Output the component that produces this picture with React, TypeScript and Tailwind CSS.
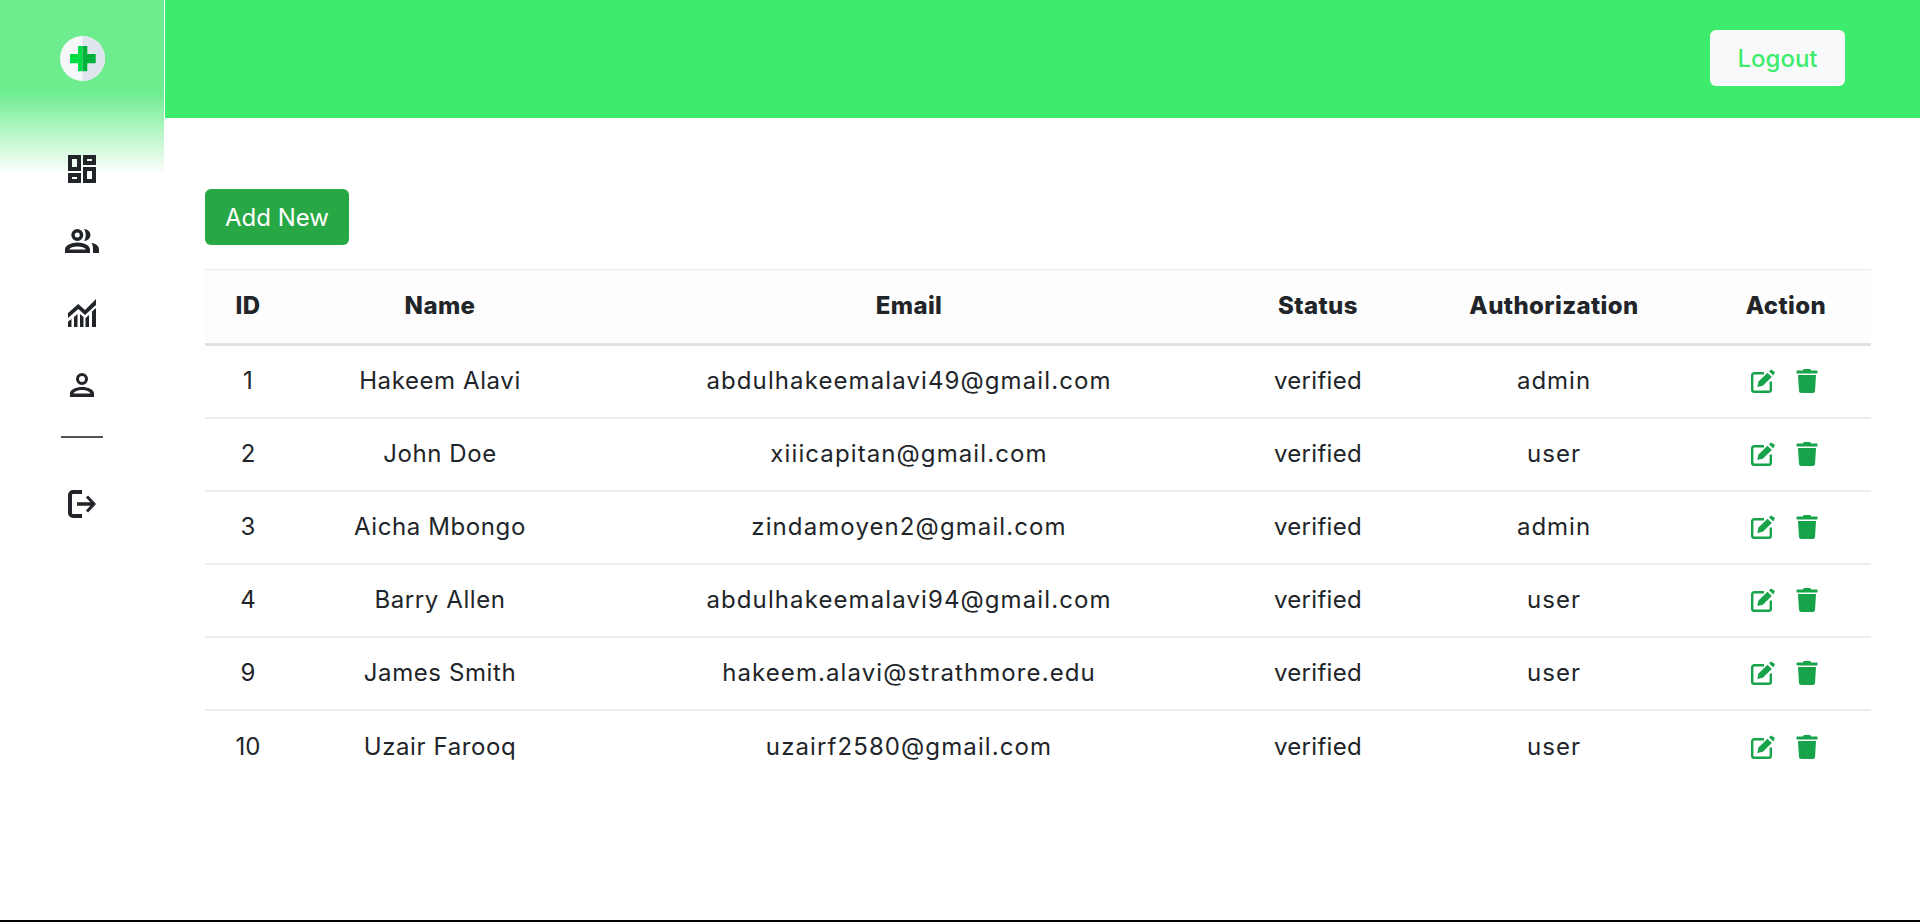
import React from "react";
import { FaTrash } from "react-icons/fa";

const rows = [
  ["1", "Hakeem Alavi", "abdulhakeemalavi49@gmail.com", "verified", "admin"],
  ["2", "John Doe", "xiiicapitan@gmail.com", "verified", "user"],
  ["3", "Aicha Mbongo", "zindamoyen2@gmail.com", "verified", "admin"],
  ["4", "Barry Allen", "abdulhakeemalavi94@gmail.com", "verified", "user"],
  ["9", "James Smith", "hakeem.alavi@strathmore.edu", "verified", "user"],
  ["10", "Uzair Farooq", "uzairf2580@gmail.com", "verified", "user"],
];

const columnTracking = [
  "tracking-[0px]",
  "tracking-[0.6px]",
  "tracking-[1.1px]",
  "tracking-[0.3px]",
  "tracking-[1px]",
];

function Logo() {
  return (
    <svg width="45" height="45" viewBox="0 0 45 45">
      <circle cx="22.500" cy="22.500" r="22.500" fill="#f6f7f9" />
      <path d="M22.500 0a22.500 22.500 0 0 1 0 45z" fill="#dfe5ec" />
      <path d="M18 10H22.500V35.300H18V27.300H10V18H18z" fill="#00dc45" />
      <path d="M22.500 10H27.300V18H35.700V27.300H27.300V35.300H22.500z" fill="#00b23a" />
    </svg>
  );
}

function DashboardIcon() {
  return (
    <svg width="28" height="28" viewBox="0 0 28 28" fill="#212529" fillRule="evenodd">
      <path d="M0 0H13V16H0zM4 4V12H9V4z" />
      <path d="M15 0H28V10H15zM19 4V6H24V4z" />
      <path d="M15 12H28V28H15zM19 16V24H24V16z" />
      <path d="M0 18H13V28H0zM4 22V24H9V22z" />
    </svg>
  );
}

function PeopleIcon() {
  return (
    <svg width="34" height="24" viewBox="0 0 34 24" fill="#212529" fillRule="evenodd">
      <path d="M12.300 0a6 6 0 1 1 0 12 6 6 0 0 1 0-12zM12.300 3.500a2.500 2.500 0 1 0 0 5 2.500 2.500 0 0 0 0-5z" />
      <path d="M19 0a6.500 6 0 0 1 0 12c1.200-1.500 1.700-3.500 1.700-6S20.200 1.500 19 0z" />
      <path d="M0 24v-3.500c0-4 6-7 12.500-7S25 16.500 25 20.500V24zM4 20.500h17c-1-2-4.500-3-8.500-3s-7.500 1-8.500 3z" />
      <path d="M26.500 14c4.500.5 7.500 3 7.500 6.500V24h-6v-3.500c0-2.500-.3-4.800-1.500-6.500z" />
    </svg>
  );
}

function ChartIcon() {
  return (
    <svg width="28" height="28" viewBox="0 0 28 28" fill="#212529">
      <path d="M0 14 10.300 5 17 11 28 0V6L17 16 10.300 10 0 19z" />
      <path d="M0 22.500 3.500 20V28H0zM6 18 9.500 15V28H6zM12 15 15.500 18V28H12zM17.500 19 21 16V28H17.500zM24 12.500 28 9V28H24z" />
    </svg>
  );
}

function PersonIcon() {
  return (
    <svg width="24" height="24" viewBox="0 0 24 24" fill="#212529" fillRule="evenodd">
      <path d="M12 0a6 6 0 1 1 0 12 6 6 0 0 1 0-12zM12 3a3 3 0 1 0 0 6 3 3 0 0 0 0-6z" />
      <path d="M0 24v-3.500c0-4 6-6.500 12-6.500s12 2.500 12 6.500V24zM3.500 20.500h17c-1-2-4.500-3.500-8.500-3.500s-7.500 1.500-8.500 3.500z" />
    </svg>
  );
}

function ExitIcon() {
  return (
    <svg width="28" height="28" viewBox="0 0 28 28" fill="none" stroke="#212529">
      <path d="M14 2H5a3 3 0 0 0-3 3v18a3 3 0 0 0 3 3H14" strokeWidth="4" />
      <path d="M9 14h16" strokeWidth="3.500" />
      <path d="M19 6.500 26 14l-7 7.500" strokeWidth="3" />
    </svg>
  );
}

function EditIcon() {
  return (
    <svg width="24" height="24" viewBox="0 0 24 24" fill="none">
      <path d="M13 4.200H3.200a2 2 0 0 0-2 2v14.600a2 2 0 0 0 2 2h14.600a2 2 0 0 0 2-2V12.500" stroke="currentColor" strokeWidth="2.400" />
      <path d="M6.300 18 7.500 12.500 16.500 3.700 20.800 8 11.800 16.800z" fill="currentColor" />
      <path d="M18 2.300 20 .5 24 3 22.300 6.600z" fill="currentColor" />
    </svg>
  );
}

const font = "font-['Inter','Liberation_Sans',sans-serif]";

export default function App() {
  return (
    <div className={`${font} h-[922px] w-full overflow-hidden border-b-2 border-black bg-white text-[#212529] flex`}>
      <aside className="w-[164px] shrink-0 h-full flex flex-col items-center bg-[linear-gradient(#6cec8d_0,#6eed8e_92px,#ffffff_174px)]">
        <div className="mt-[36px] h-[45px]"><Logo /></div>
        <nav className="mt-[52px] flex flex-col items-center">
          <div className="h-[72px] flex items-center justify-center"><DashboardIcon /></div>
          <div className="h-[72px] flex items-center justify-center"><PeopleIcon /></div>
          <div className="h-[72px] flex items-center justify-center"><ChartIcon /></div>
          <div className="h-[72px] flex items-center justify-center"><PersonIcon /></div>
        </nav>
        <div className="mt-[15px] w-[42px] h-[2px] bg-[#555555]" />
        <div className="mt-[52px]"><ExitIcon /></div>
      </aside>
      <div className="flex-1 ml-px flex flex-col min-w-0">
        <header className="h-[118px] shrink-0 bg-[#3dec6d] flex items-center justify-end pr-[75px]">
          <button className="w-[135px] h-[56px] -mt-[2px] pt-[2px] rounded-[6px] bg-[#f8f9fa] text-[#3dec6d] text-[24px] font-medium">Logout</button>
        </header>
        <main className="pl-[40px] pr-[50px] pt-[71px]">
          <button className="w-[144px] h-[56px] pt-[2px] rounded-[6px] bg-[#28a745] text-white text-[24px]">Add New</button>
          <table className="mt-[24px] w-full table-fixed border-collapse text-center text-[24px] font-normal">
            <colgroup>
              <col className="w-[86px]" />
              <col className="w-[298px]" />
              <col className="w-[640px]" />
              <col className="w-[178px]" />
              <col className="w-[294px]" />
              <col className="w-[170px]" />
            </colgroup>
            <thead>
              <tr className="h-[75px] bg-[#fdfdfd] border-t border-t-[#e9ecef] border-b-[3px] border-b-[#dee2e6]">
                {["ID", "Name", "Email", "Status", "Authorization", "Action"].map((h) => (
                  <th key={h} className="pb-[2px] font-extrabold tracking-[0.4px]">{h}</th>
                ))}
              </tr>
            </thead>
            <tbody>
              {rows.map((r, i) => (
                <tr key={r[0]} className={`h-[73px] ${i < rows.length - 1 ? "border-b-2 border-b-[#ebedef]" : ""}`}>
                  {r.map((c, j) => (
                    <td key={j} className={columnTracking[j]}>{c}</td>
                  ))}
                  <td>
                    <div className="flex justify-center items-center gap-[20px] -translate-x-px text-[#16a34a]">
                      <EditIcon />
                      <FaTrash className="text-[24px]" />
                    </div>
                  </td>
                </tr>
              ))}
            </tbody>
          </table>
        </main>
      </div>
    </div>
  );
}
